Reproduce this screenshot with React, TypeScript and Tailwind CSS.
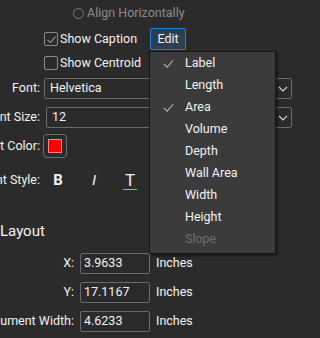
import React from "react";

const menuItems = [
  { label: "Label", checked: true },
  { label: "Length", checked: false },
  { label: "Area", checked: true },
  { label: "Volume", checked: false },
  { label: "Depth", checked: false },
  { label: "Wall Area", checked: false },
  { label: "Width", checked: false },
  { label: "Height", checked: false },
  { label: "Slope", checked: false, disabled: true },
];

function Check({ className }: { className?: string }) {
  return (
    <svg viewBox="0 0 14 14" className={className} fill="none" stroke="currentColor" strokeWidth="1.2">
      <path d="M2 7.5 L5.5 11 L12 3.5" />
    </svg>
  );
}

function Chevron() {
  return (
    <svg viewBox="0 0 10 6" className="h-[6px] w-[10px]" fill="none" stroke="#d8d8d8" strokeWidth="1.1">
      <path d="M1 1 L5 5 L9 1" />
    </svg>
  );
}

function Label({ text, w }: { text: string; w: string }) {
  return <div className={`flex shrink-0 justify-end whitespace-nowrap ${w}`}>{text}</div>;
}

function Select({ value, left }: { value: string; left: string }) {
  return (
    <div className={`flex h-[21px] w-[248px] items-stretch rounded-[2px] border border-[#6a6a6a] ${left}`}>
      <div className="flex flex-1 items-center pl-[5px]">{value}</div>
      <div className="flex w-[17px] items-center justify-center border-l border-[#6a6a6a]">
        <Chevron />
      </div>
    </div>
  );
}

function NumRow({ label, value }: { label: string; value: string }) {
  return (
    <div className="flex h-[21px] items-center">
      <Label text={label} w="w-[74px]" />
      <div className="ml-[6px] flex h-[21px] w-[70px] items-center rounded-[2px] border border-[#6a6a6a] pl-[3px]">
        {value}
      </div>
      <div className="ml-[6px]">Inches</div>
    </div>
  );
}

export default function App() {
  return (
    <div
      className="relative h-[338px] w-[320px] overflow-hidden bg-[#2b2b2b] text-[12.5px] text-[#f2f2f2]"
      style={{ fontFamily: "Roboto, 'Noto Sans', sans-serif" }}
    >
      <div className="flex flex-col">
        <div className="flex h-[26px] items-center pl-[73px] text-[#8c8c8c]">
          <div className="h-[11px] w-[11px] rounded-full border border-[#7a7a7a]" />
          <span className="ml-[3px]">Align Horizontally</span>
        </div>

        <div className="mt-[2px] flex h-[22px] items-center pl-[44px]">
          <div className="flex w-[106px] items-center">
            <div className="flex h-[14px] w-[14px] items-center justify-center rounded-[2px] border border-[#8a8a8a] text-[#d0d0d0]">
              <Check className="h-[11px] w-[11px]" />
            </div>
            <span className="ml-[2px]">Show Caption</span>
          </div>
          <div className="flex h-[22px] w-[36px] items-center justify-center rounded-[2px] border border-[#1d7fd6] bg-[#2c3e50]">
            Edit
          </div>
        </div>

        <div className="mt-[3px] flex h-[20px] items-center pl-[44px]">
          <div className="h-[14px] w-[14px] rounded-[2px] border border-[#8a8a8a]" />
          <span className="ml-[2px]">Show Centroid</span>
        </div>

        <div className="mt-[5px] flex h-[21px] items-center">
          <Label text="Font:" w="w-[40px]" />
          <Select value="Helvetica" left="ml-[4px]" />
        </div>

        <div className="mt-[8px] flex h-[21px] items-center">
          <Label text="Font Size:" w="w-[40px]" />
          <Select value="12" left="ml-[6px] !w-[246px]" />
        </div>

        <div className="mt-[6px] flex h-[24px] items-center">
          <Label text="Font Color:" w="w-[40px]" />
          <div className="ml-[3px] flex h-[24px] w-[24px] items-center justify-center rounded-[4px] border border-[#6e6e6e]">
            <div className="h-[14px] w-[14px] border border-[#ff8080] bg-[#ff0000]" />
          </div>
        </div>

        <div className="mt-[12px] flex h-[20px] items-center">
          <Label text="Font Style:" w="w-[40px]" />
          <div className="ml-[12px] w-[12px] text-center text-[15px] font-bold">B</div>
          <div className="ml-[24px] w-[12px] text-center text-[15px] italic" style={{ fontFamily: "'Liberation Sans', sans-serif" }}>
            I
          </div>
          <div className="ml-[23px] flex w-[14px] flex-col items-center">
            <span className="text-[17px] leading-[18px]">T</span>
            <div className="h-[1px] w-[14px] bg-[#d4a63a]" />
          </div>
        </div>

        <div className="mt-[31px] flex h-[20px] items-center text-[15px]">Layout</div>

        <div className="mt-[12px] flex flex-col gap-[8px]">
          <NumRow label="X:" value="3.9633" />
          <NumRow label="Y:" value="17.1167" />
          <NumRow label="Document Width:" value="4.6233" />
        </div>
      </div>

      <div className="absolute left-[149px] top-[51px] w-[127px] border border-[#151515] bg-[#3b3b3b] pb-[3px] shadow-[2px_2px_2px_rgba(0,0,0,0.4)]">
        {menuItems.map((item) => (
          <div
            key={item.label}
            className={`flex h-[22px] items-center ${item.disabled ? "text-[#6e6e6e]" : "text-[#f2f2f2]"}`}
          >
            <div className="flex w-[35px] justify-center pl-[2px] text-[#b4b4b4]">
              {item.checked && <Check className="h-[13px] w-[13px]" />}
            </div>
            <span>{item.label}</span>
          </div>
        ))}
      </div>
    </div>
  );
}
